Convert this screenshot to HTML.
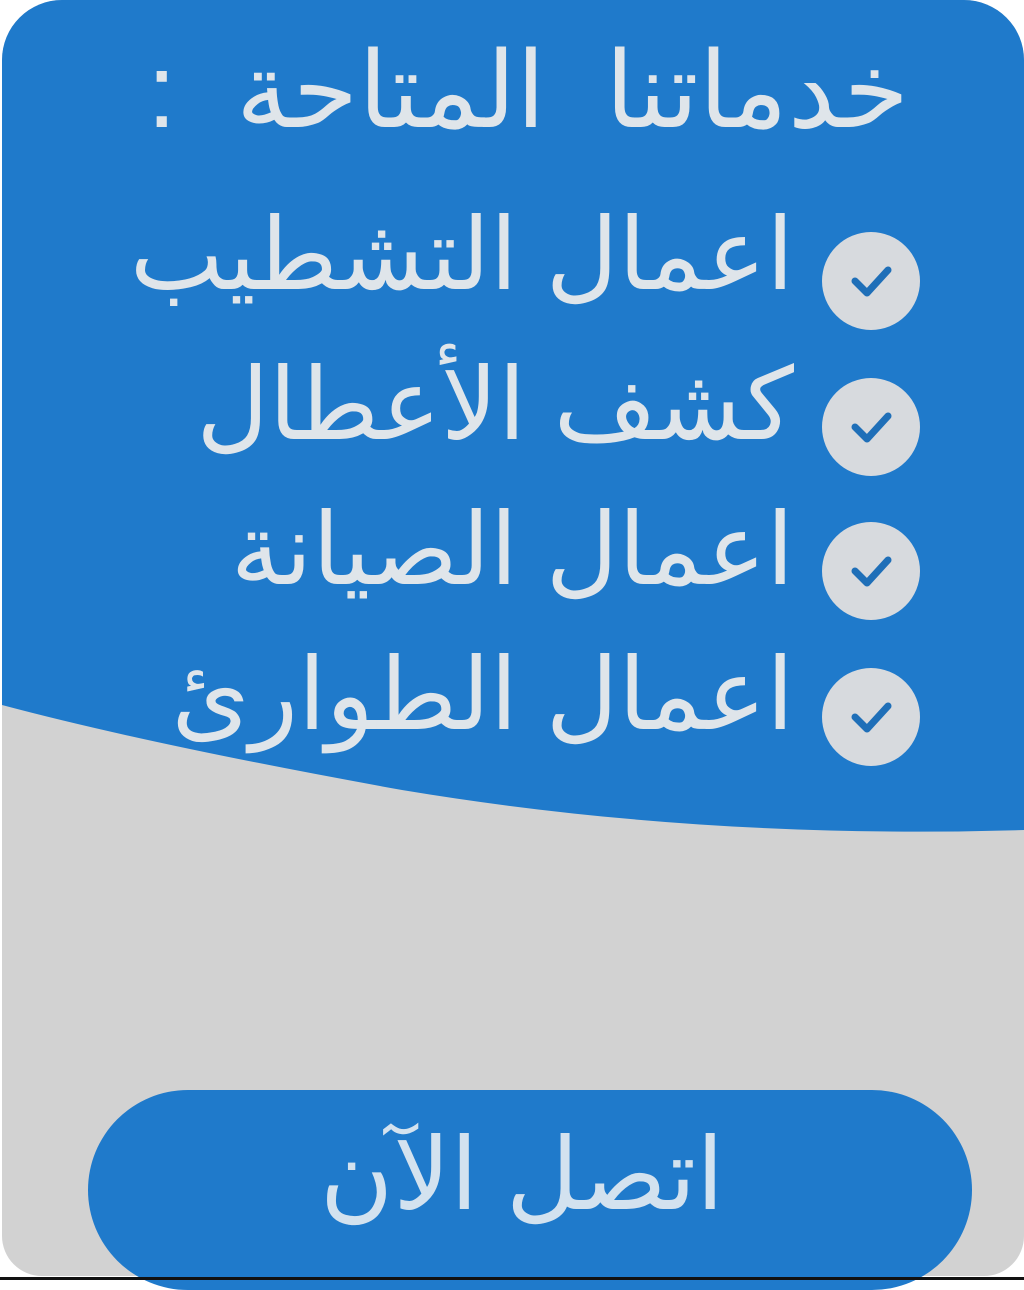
<!DOCTYPE html>
<html><head><meta charset="utf-8"><style>
html,body{margin:0;padding:0;width:1024px;height:1280px;overflow:hidden;background:#fff;}
.card{position:absolute;left:2px;top:0;width:1022px;height:1276px;background:#d2d2d2;border-radius:60px 60px 40px 40px;overflow:hidden;}
svg.w{position:absolute;left:0;top:0}
.t{position:absolute;font-family:"Liberation Sans","Noto Sans CJK SC",sans-serif;color:#dfe5ea;direction:rtl;white-space:nowrap;line-height:1;}
.chk{position:absolute;width:98px;height:98px;border-radius:50%;background:#d7dade;}
.chk svg{position:absolute;left:0;top:0}
.btn{position:absolute;left:88px;top:1090px;width:884px;height:200px;border-radius:100px;background:#1f7acb;}
.bar{position:absolute;left:0;top:1277px;width:1024px;height:3px;background:#111;}
</style></head><body>
<div class="card">
<svg class="w" width="1024" height="1280"><path d="M0 0 H1024 V830 Q700 840 400 790 Q150 745 0 705 Z" fill="#1f7acb"/></svg>
<div class="t" style="right:115px;top:38px;font-size:106px;word-spacing:30px;">خدماتنا المتاحة :</div>
<div class="t" style="right:230px;top:205px;font-size:100px;">اعمال التشطيب</div>
<div class="t" style="right:230px;top:355px;font-size:100px;">كشف الأعطال</div>
<div class="t" style="right:230px;top:500px;font-size:100px;">اعمال الصيانة</div>
<div class="t" style="right:230px;top:645px;font-size:100px;">اعمال الطوارئ</div>
<div class="chk" style="left:820px;top:232px"><svg width="98" height="98"><path d="M33 49 L45 61 L66 38" stroke="#1f6fb8" stroke-width="7" fill="none" stroke-linecap="round" stroke-linejoin="round"/></svg></div>
<div class="chk" style="left:820px;top:378px"><svg width="98" height="98"><path d="M33 49 L45 61 L66 38" stroke="#1f6fb8" stroke-width="7" fill="none" stroke-linecap="round" stroke-linejoin="round"/></svg></div>
<div class="chk" style="left:820px;top:522px"><svg width="98" height="98"><path d="M33 49 L45 61 L66 38" stroke="#1f6fb8" stroke-width="7" fill="none" stroke-linecap="round" stroke-linejoin="round"/></svg></div>
<div class="chk" style="left:820px;top:668px"><svg width="98" height="98"><path d="M33 49 L45 61 L66 38" stroke="#1f6fb8" stroke-width="7" fill="none" stroke-linecap="round" stroke-linejoin="round"/></svg></div>
</div>
<div class="btn"></div>
<div class="t" style="right:300px;top:1125px;font-size:100px;color:#d3e2ef;">اتصل الآن</div>
<div class="bar"></div>
</body></html>
